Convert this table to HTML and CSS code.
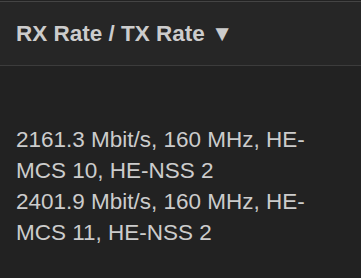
FILE: index.html
```html
<!DOCTYPE html>
<html>
<head>
<meta charset="utf-8">
<link rel="stylesheet" href="styles.css">
</head>
<body>
<div class="table">
  <div class="head">RX Rate / TX Rate ▼</div>
  <div class="cell">
    <div class="rate">2161.3 Mbit/s, 160 MHz, HE-MCS 10, HE-NSS 2</div>
    <div class="rate">2401.9 Mbit/s, 160 MHz, HE-MCS 11, HE-NSS 2</div>
  </div>
</div>
</body>
</html>
```
FILE: styles.css
```css
html, body {
  margin: 0;
  padding: 0;
  background: #222222;
}
body {
  width: 361px;
  height: 278px;
  overflow: hidden;
  font-family: "Liberation Sans", Arial, sans-serif;
  color: #cccccc;
}
.table {
  padding-top: 1px;
}
.head {
  border-top: 1px solid #444444;
  border-bottom: 1px solid #3c3c3c;
  background: #262626;
  height: 63px;
  box-sizing: content-box;
  display: flex;
  align-items: center;
  padding-left: 16px;
  font-weight: bold;
  font-size: 22.5px;
}
.cell {
  padding: 58px 0 0 16px;
  font-size: 22.5px;
  line-height: 31px;
  max-width: 310px;
}
```
